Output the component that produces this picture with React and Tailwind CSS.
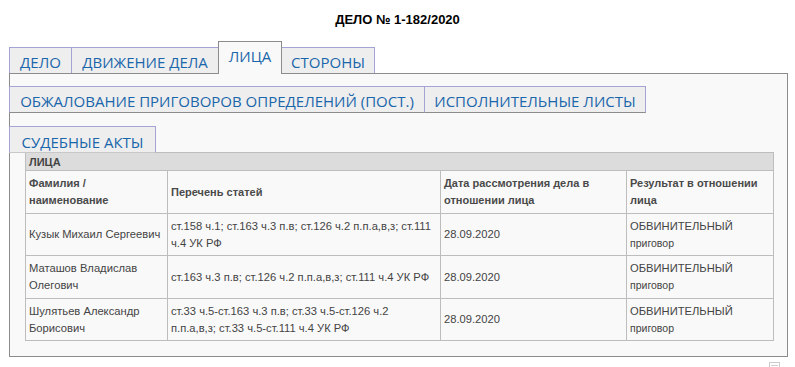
import React from 'react';

const tabCls = "flex items-start justify-center whitespace-nowrap pt-[4px] text-[15px] leading-[20px] text-[#1a66ab] font-['Open_Sans',sans-serif]";
const cell = "border border-[#bdbdbd] px-[3px] pt-[4px] pb-[3px]";

const rows = [
  {
    name: <>Кузык Михаил Сергеевич</>,
    articles: <>ст.158 ч.1; ст.163 ч.3 п.в; ст.126 ч.2 п.п.а,в,з; ст.111<br />ч.4 УК РФ</>,
    date: "28.09.2020",
  },
  {
    name: <>Маташов Владислав<br />Олегович</>,
    articles: <>ст.163 ч.3 п.в; ст.126 ч.2 п.п.а,в,з; ст.111 ч.4 УК РФ</>,
    date: "28.09.2020",
  },
  {
    name: <>Шулятьев Александр<br />Борисович</>,
    articles: <>ст.33 ч.5-ст.163 ч.3 п.в; ст.33 ч.5-ст.126 ч.2<br />п.п.а,в,з; ст.33 ч.5-ст.111 ч.4 УК РФ</>,
    date: "28.09.2020",
  },
];

export default function App() {
  return (
    <div className="min-h-[367px] bg-white font-['Liberation_Sans',Arial,sans-serif]">
      <div className="pt-[12px] text-center text-[13px] leading-[16px] font-bold text-black">
        ДЕЛО № 1-182/2020
      </div>

      <div className="ml-[9px] w-[779px] mt-[13px]">
        {/* top tab row */}
        <div className="flex items-end h-[32px]">
          <div className={`${tabCls} w-[63px] h-[26px] border-t border-x border-[#a3a3d6] bg-[#eeeeee]`}>ДЕЛО</div>
          <div className={`${tabCls} w-[148px] h-[26px] -ml-px border-t border-x border-[#a3a3d6] bg-[#eeeeee]`}>ДВИЖЕНИЕ ДЕЛА</div>
          <div className={`${tabCls} relative w-[64px] h-[33px] -ml-px -mb-px border-t border-x border-[#8c8c8c] bg-[#f9f9f9]`}>ЛИЦА</div>
          <div className={`${tabCls} w-[94px] h-[26px] -ml-px border-t border-x border-[#a3a3d6] bg-[#eeeeee]`}>СТОРОНЫ</div>
        </div>

        {/* panel */}
        <div className="border border-[#8c8c8c] bg-[#f9f9f9] pt-[12px] pb-[15px]">
          <div className="flex -ml-px">
            <div className={`${tabCls} relative w-[416px] h-[27px] border-t border-x border-b border-[#a3a3d6] border-b-[#8c8c8c] bg-[#eeeeee]`}>
              ОБЖАЛОВАНИЕ ПРИГОВОРОВ ОПРЕДЕЛЕНИЙ (ПОСТ.)
            </div>
            <div className={`${tabCls} relative w-[222px] h-[27px] -ml-px border-t border-x border-b border-[#a3a3d6] border-b-[#8c8c8c] bg-[#eeeeee]`}>
              ИСПОЛНИТЕЛЬНЫЕ ЛИСТЫ
            </div>
          </div>
          <div className="flex -ml-px mt-[13px]">
            <div className={`${tabCls} relative w-[147px] h-[27px] pt-[5px] border-t border-x border-b border-[#a3a3d6] border-b-[#c8c8c8] bg-[#eeeeee]`}>
              СУДЕБНЫЕ АКТЫ
            </div>
          </div>

          <table className="ml-[15px] -mt-px w-[748px] border-collapse table-fixed text-[11.2px] leading-[17.3px] text-[#444]">
            <colgroup>
              <col className="w-[142px]" />
              <col className="w-[273px]" />
              <col className="w-[186px]" />
              <col className="w-[147px]" />
            </colgroup>
            <tbody>
              <tr>
                <td colSpan={4} className="h-[18px] border border-[#bdbdbd] bg-[#dcdcdc] px-[3px] py-0 text-[11px] leading-[16px] font-bold text-[#444]">
                  ЛИЦА
                </td>
              </tr>
              <tr className="font-bold text-[11px] text-[#4a4a4a]">
                <td className={cell}>Фамилия /<br />наименование</td>
                <td className={cell}>Перечень статей</td>
                <td className={cell}>Дата рассмотрения дела в<br />отношении лица</td>
                <td className={cell}>Результат в отношении<br />лица</td>
              </tr>
              {rows.map((r, i) => (
                <tr key={i}>
                  <td className={`${cell} whitespace-nowrap`}>{r.name}</td>
                  <td className={`${cell} whitespace-nowrap`}>{r.articles}</td>
                  <td className={cell}>{r.date}</td>
                  <td className={cell}>
                    ОБВИНИТЕЛЬНЫЙ<br /><span className="text-[10.5px]">приговор</span>
                  </td>
                </tr>
              ))}
            </tbody>
          </table>
        </div>
      </div>

      <div className="flex justify-end pr-[15px] mt-[5px]">
        <svg width="11" height="11" viewBox="0 0 11 11" className="block">
          <rect x="0.5" y="0.5" width="10" height="10" fill="none" stroke="#cccccc" />
          <line x1="2" y1="3.5" x2="9" y2="3.5" stroke="#cccccc" />
        </svg>
      </div>
    </div>
  );
}
